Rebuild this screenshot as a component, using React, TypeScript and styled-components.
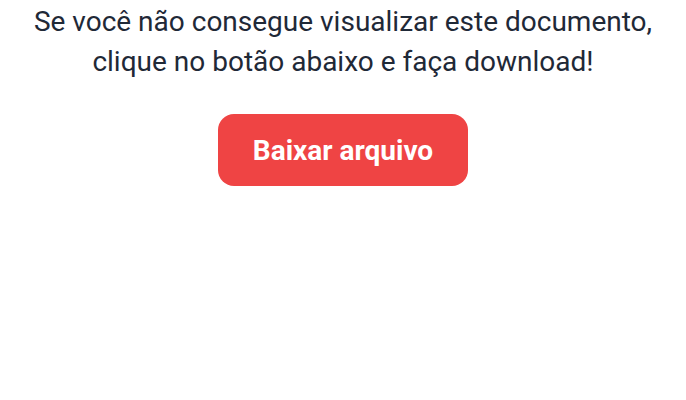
import React from "react";
import styled, { createGlobalStyle } from "styled-components";

const Global = createGlobalStyle`
  html, body { margin: 0; padding: 0; background: #fff; }
  body { font-family: Roboto, "Noto Sans", sans-serif; }
`;

const Page = styled.div`
  display: flex;
  flex-direction: column;
  align-items: center;
  padding-top: 2px;
`;

const Message = styled.p`
  margin: 0;
  font-size: 28px;
  line-height: 40px;
  color: #1f2937;
  text-align: center;
  font-weight: 400;
`;

const Button = styled.a`
  margin-top: 32px;
  display: flex;
  align-items: center;
  justify-content: center;
  width: 250px;
  height: 72px;
  box-sizing: border-box;
  border-radius: 16px;
  background: #ef4444;
  color: #fff;
  font-size: 28px;
  font-weight: 700;
  text-decoration: none;
`;

export default function App() {
  return (
    <>
      <Global />
      <Page>
        <Message>
          Se você não consegue visualizar este documento,
          <br />
          clique no botão abaixo e faça download!
        </Message>
        <Button href="#">Baixar arquivo</Button>
      </Page>
    </>
  );
}
